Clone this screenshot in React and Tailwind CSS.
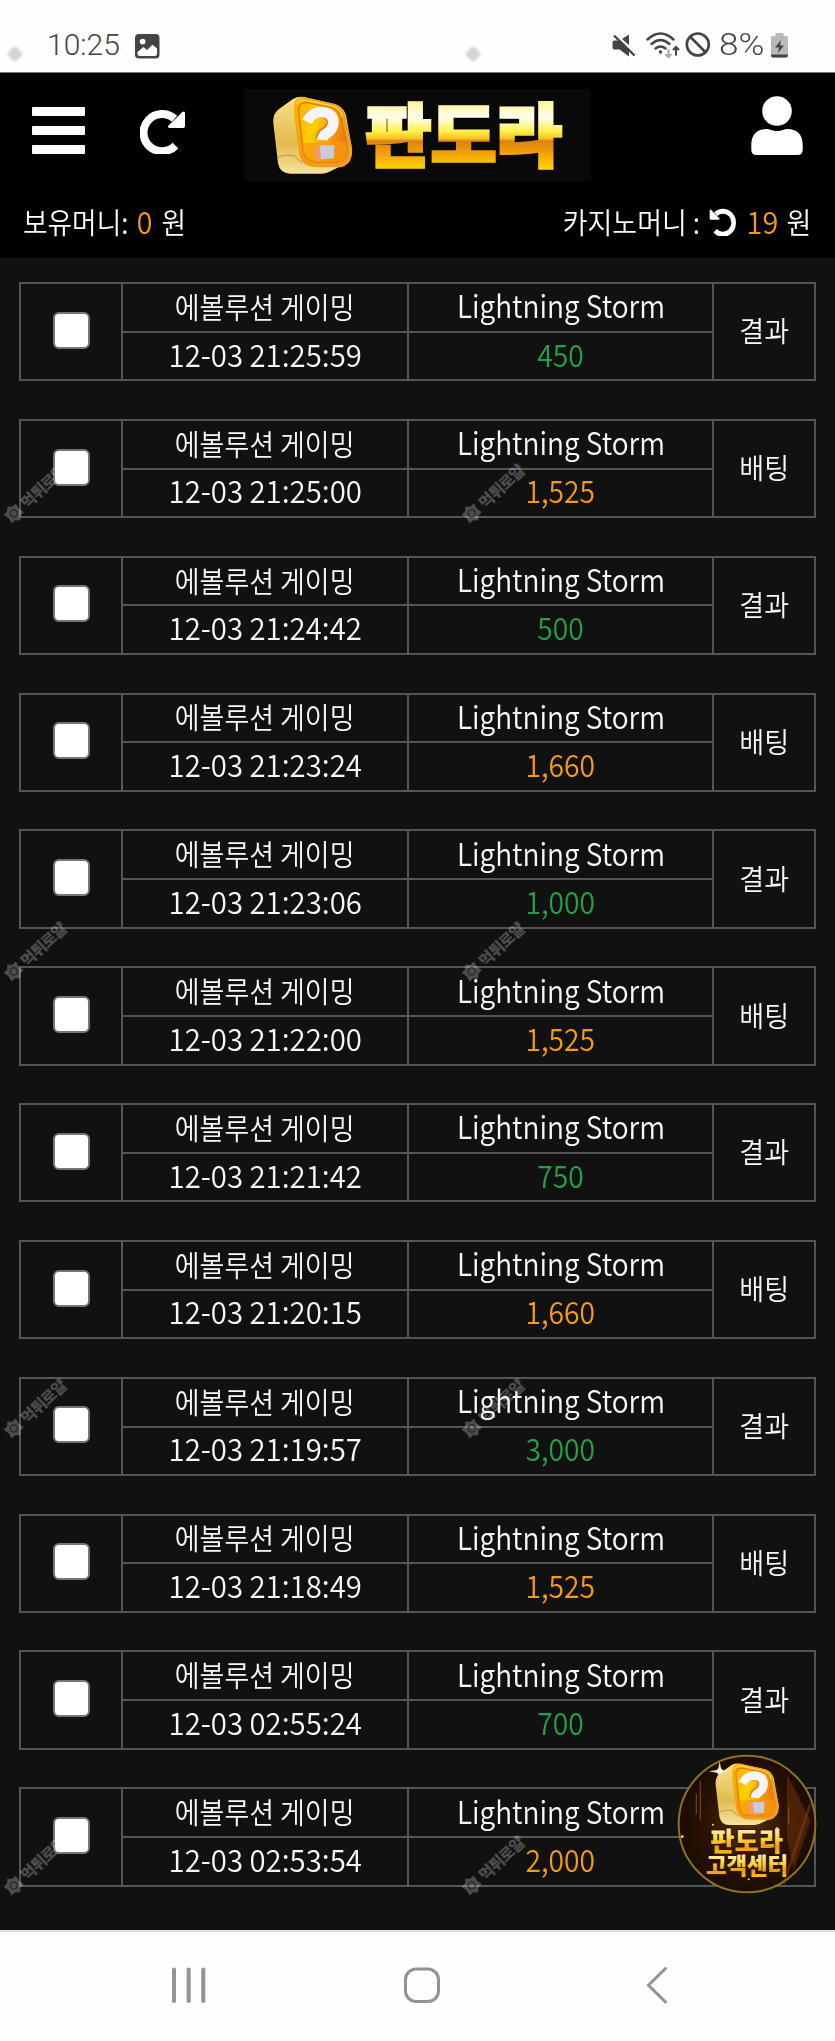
import React from "react";

const rows = [
  ["12-03 21:25:59", "450", true],
  ["12-03 21:25:00", "1,525", false],
  ["12-03 21:24:42", "500", true],
  ["12-03 21:23:24", "1,660", false],
  ["12-03 21:23:06", "1,000", true],
  ["12-03 21:22:00", "1,525", false],
  ["12-03 21:21:42", "750", true],
  ["12-03 21:20:15", "1,660", false],
  ["12-03 21:19:57", "3,000", true],
  ["12-03 21:18:49", "1,525", false],
  ["12-03 02:55:24", "700", true],
  ["12-03 02:53:54", "2,000", false],
];

const marks = [
  [35, 493], [493, 493],
  [35, 951], [493, 951],
  [35, 1408], [493, 1408],
  [35, 1865], [493, 1865],
];

function Cube() {
  return (
    <g>
      <path d="M160 56 Q180 46 205 54 L285 72 Q310 80 318 105 L336 205 Q340 235 310 255 L265 277 Q255 282 240 281 L150 281 Q120 280 114 250 L100 130 Q97 100 118 86Z" fill="url(#cubeSide)" />
      <path d="M162 75 Q165 52 190 52 L275 70 Q308 78 315 105 L336 205 Q340 250 305 262 L225 262 Q185 258 178 225 L163 110Z" fill="url(#cubeFace)" />
      <path d="M176 85 Q178 68 200 68 L270 82 Q296 88 303 112 L322 200 Q325 240 296 248 L228 246 Q195 242 190 215 L178 110Z" fill="url(#cubeInner)" stroke="#e07a00" strokeWidth="4" />
      <path d="M188 190 L318 185 L322 215 Q320 244 296 248 L228 246 Q195 242 190 215Z" fill="#f59a10" opacity=".75" />
      <path d="M170 72 Q175 60 195 60 L275 77 Q302 85 308 110" fill="none" stroke="#ffd23a" strokeWidth="5" />
      <path d="M112 232 Q135 222 165 228 L186 250" fill="none" stroke="#b98a20" strokeWidth="4" opacity=".6" />
      <path d="M204 120 Q216 96 242 97 Q276 100 275 128 Q274 148 254 158 Q243 164 243 176" fill="none" stroke="#d9643a" strokeWidth="33" strokeLinejoin="round" opacity=".7" />
      <path d="M201 125 Q215 96 245 96 Q281 98 280 130 Q278 150 260 160 Q248 167 247 180" fill="none" stroke="#f6f4f8" strokeWidth="32" strokeLinejoin="round" />
      <path d="M224 200 L245 195 L245 238 L229 245Z" fill="#f09a70" />
      <path d="M240 196 L283 195 L281 235 L243 238Z" fill="#c9cbd8" />
    </g>
  );
}

function Defs() {
  return (
    <defs>
      <linearGradient id="gold" gradientUnits="userSpaceOnUse" x1="0" y1="72" x2="0" y2="268">
        <stop offset="0" stopColor="#fff6a0" />
        <stop offset=".2" stopColor="#fffdf0" />
        <stop offset=".42" stopColor="#fff04a" />
        <stop offset=".53" stopColor="#f5c020" />
        <stop offset=".57" stopColor="#dd8210" />
        <stop offset=".72" stopColor="#f09a08" />
        <stop offset="1" stopColor="#ffd400" />
      </linearGradient>
      <linearGradient id="cubeSide" x1="0" y1="0" x2="0" y2="1">
        <stop offset="0" stopColor="#f7e08a" />
        <stop offset=".6" stopColor="#e2bb4e" />
        <stop offset="1" stopColor="#f5e3a0" />
      </linearGradient>
      <linearGradient id="cubeFace" x1="0" y1="0" x2="1" y2="1">
        <stop offset="0" stopColor="#ffb400" />
        <stop offset=".5" stopColor="#f39a10" />
        <stop offset="1" stopColor="#f0a030" />
      </linearGradient>
      <linearGradient id="cubeInner" x1="0" y1="0" x2="1" y2=".4">
        <stop offset="0" stopColor="#f5b000" />
        <stop offset=".4" stopColor="#ffd000" />
        <stop offset="1" stopColor="#ee7a10" />
      </linearGradient>
      <radialGradient id="badgeBg">
        <stop offset="0" stopColor="#5a3005" />
        <stop offset=".6" stopColor="#2c1204" />
        <stop offset="1" stopColor="#1c0c04" />
      </radialGradient>
      <linearGradient id="gold2" x1="0" y1="0" x2="0" y2="1">
        <stop offset=".2" stopColor="#fff6c0" />
        <stop offset=".5" stopColor="#fbd23c" />
        <stop offset=".7" stopColor="#e89a10" />
        <stop offset="1" stopColor="#ffd820" />
      </linearGradient>
    </defs>
  );
}

function Logo() {
  return (
    <svg className="h-[92px] w-[347px] overflow-visible bg-[#090909]" viewBox="12 27 1041 276">
      <Defs />
      <Cube />
      <text x="377" y="244" textLength="588" lengthAdjust="spacingAndGlyphs" fontSize="206" fontWeight="900" fontFamily="'Noto Sans CJK KR', sans-serif" fill="url(#gold)" stroke="url(#gold)" strokeWidth="11">판도라</text>
    </svg>
  );
}

function Reload({ className }) {
  return (
    <svg className={className} viewBox="0 0 45 45">
      <path d="M34.5 9.8 A18.6 18.6 0 1 0 35.5 36.6" fill="none" stroke="#fff" strokeWidth="8" />
      <path d="M42.2 3.2 Q45 1.2 45 4.5 V17 Q45 19 43 19 H30 Q27 18.6 28.5 16.4Z" fill="#fff" />
    </svg>
  );
}

function StatusBar() {
  return (
    <div className="flex h-[72px] items-start justify-between bg-[#fefefe] pl-[47px] pr-[47px] pt-[32px] text-[#444]">
      <div className="flex">
        <span className="w-[88px] whitespace-nowrap font-['Roboto',sans-serif] text-[30px] font-light leading-[26px]">10:25</span>
        <svg className="mt-[2px] size-[25px]" viewBox="0 0 25 25">
          <rect width="24.5" height="24.5" rx="4" fill="#444" />
          <circle cx="7.6" cy="7.6" r="2.9" fill="#fff" />
          <path d="M2.5 18 L8.5 13 L12 16 L17.5 10.8 L22 14.6 V20 Q22 22 20 22 H5 Q2.5 22 2.5 20Z" fill="#fff" />
        </svg>
      </div>
      <div className="flex">
        <svg className="h-[27px] w-[109px]" viewBox="0 0 109 27">
          <g transform="translate(10.5,0)">
            <path d="M2 8.5 H7 L16.500 2.500 V24.500 L7 17.500 H2 Q0 17.500 0 15.500 V10.500 Q0 8.500 2 8.500Z" fill="#444" />
            <path d="M2.500 2 L23.500 21.500" stroke="#fefefe" strokeWidth="2.500" />
            <path d="M1.500 3.500 L22 23.500" stroke="#444" strokeWidth="2.400" />
          </g>
          <g fill="none" stroke="#444" strokeWidth="2.400" strokeLinecap="round">
            <path d="M45.500 7.500 Q58.500 -4.500 71.500 7.500" />
            <path d="M49.500 12 Q58.500 4 67.500 12" />
            <path d="M53.500 16.500 Q58.500 12.500 63.500 16.500" />
          </g>
          <circle cx="58.5" cy="20" r="1.700" fill="#444" />
          <path d="M66.500 17 V25 M63.500 22 L66.500 25 L69.500 22" fill="none" stroke="#aaa" strokeWidth="2" />
          <path d="M74 23.500 V15 M71 18 L74 15 L77 18" fill="none" stroke="#444" strokeWidth="2" />
          <g fill="none" stroke="#444" strokeWidth="2.600">
            <circle cx="95.8" cy="12.5" r="11" />
            <path d="M88 4.500 L103.800 20.500" />
          </g>
        </svg>
        <span className="ml-[8px] w-[52px] origin-left scale-x-[1.150] whitespace-nowrap font-['Roboto',sans-serif] text-[30.500px] font-light leading-[26px]">8%</span>
        <svg className="mt-[1px] h-[25px] w-[17px]" viewBox="0 0 17 25">
          <path d="M4.500 0 H12.500 V3 H15 Q17 3 17 5 V22 Q17 24.500 15 24.500 H2 Q0 24.500 0 22 V5 Q0 3 2 3 H4.500Z" fill="#b9b9b9" />
          <path d="M0 21.500 H17 Q17 24.500 15 24.500 H2 Q0 24.500 0 22Z" fill="#444" />
          <path d="M10 7 L4 14.500 H8 L7 20 L13 12.500 H9Z" fill="#444" />
        </svg>
      </div>
    </div>
  );
}

function Header() {
  return (
    <header className="flex h-[186px] flex-col border-t border-[#777] bg-black font-['Noto_Sans_CJK_KR',sans-serif] text-white">
      <div className="flex h-[120px] items-start pl-8 pr-8 pt-[16px]">
        <div className="mt-[18px] flex w-[53px] flex-col gap-[10px]">
          <i className="h-[9px] rounded-[1px] bg-white" />
          <i className="h-[9px] rounded-[1px] bg-white" />
          <i className="h-[9px] rounded-[1px] bg-white" />
        </div>
        <Reload className="ml-[55px] mt-[20px] size-[45px]" />
        <div className="ml-[59px]"><Logo /></div>
        <svg className="ml-auto mt-[7px] h-[59px] w-[52px]" viewBox="0 0 52 59">
          <circle cx="26" cy="15" r="14.8" fill="#fff" />
          <path d="M15.500 33 C19 33 21 35 26 35 S33 33 36.500 33 Q51.700 33.500 51.700 49 V54 Q51.500 59 46.500 59 H5.500 Q.5 59 .3 54 V49 Q.3 33.500 15.500 33Z" fill="#fff" />
        </svg>
      </div>
      <div className="flex h-[57px] items-center justify-between pl-[23px] pr-[24px] text-[29px] font-[350]">
        <div className="flex origin-left scale-x-[0.920] items-center whitespace-nowrap">
          <span>보유머니:</span><span className="ml-[9px] text-[31px] text-[#f39c12]">0</span><span className="ml-[10px]">원</span>
        </div>
        <div className="flex origin-right scale-x-[0.930] items-center whitespace-nowrap">
          <span>카지노머니 :</span>
          <Reload className="ml-[9px] mt-[1px] h-[28px] w-[30px] -scale-x-100" />
          <span className="ml-[11px] text-[31px] text-[#f39c12]">19</span><span className="ml-[9px]">원</span>
        </div>
      </div>
    </header>
  );
}

function Row({ time, amount, result }) {
  return (
    <div className="flex h-[99.350px] shrink-0 border-2 border-[#555] text-[#f8f8f8]">
      <div className="flex w-[100px] items-center justify-center">
        <span className="mb-[3px] ml-[1px] size-[37px] rounded-[6px] border-2 border-[#767676] bg-white" />
      </div>
      <div className="flex w-[288px] flex-col border-x-2 border-[#555]">
        <div className="flex h-[48.800px] items-center justify-center border-b-2 border-[#555] pb-[2px]">
          <span className="scale-x-[0.930] whitespace-nowrap text-[29px] leading-none">에볼루션 게이밍</span>
        </div>
        <div className="flex h-[46.500px] items-center justify-center pb-[6px]">
          <span className="scale-x-[0.945] whitespace-nowrap text-[31px] leading-none">{time}</span>
        </div>
      </div>
      <div className="flex w-[303px] flex-col">
        <div className="flex h-[48.800px] items-center justify-center border-b-2 border-[#555] pb-[5px]">
          <span className="scale-x-[0.905] whitespace-nowrap text-[31px] leading-none">Lightning Storm</span>
        </div>
        <div className="flex h-[46.500px] items-center justify-center pb-[6px]">
          <span className={result ? "scale-x-[0.910] text-[31px] leading-none text-[#24a148]" : "scale-x-[0.910] text-[31px] leading-none text-[#f39c12]"}>{amount}</span>
        </div>
      </div>
      <div className="flex flex-1 items-center justify-center border-l-2 border-[#555] pb-[2px]">
        <span className="scale-x-[0.950] whitespace-nowrap text-[28.500px] leading-none">{result ? "결과" : "배팅"}</span>
      </div>
    </div>
  );
}

function Watermark({ x, y }) {
  return (
    <div className="pointer-events-none absolute flex h-[18px] w-[78px] -translate-x-1/2 -translate-y-1/2 -rotate-[43deg] items-center gap-[3px] text-white/25" style={{ left: x, top: y }}>
      <svg className="size-[19px] shrink-0" viewBox="0 0 16 16">
        <path d="M8 0 L11 3 L15 3 L14 8 L15 13 L11 13 L8 16 L5 13 L1 13 L2 8 L1 3 L5 3Z" fill="currentColor" />
        <circle cx="8" cy="8" r="3" fill="none" stroke="#222" strokeWidth="1" />
      </svg>
      <span className="whitespace-nowrap text-[16px] font-black leading-none tracking-[-1px]">먹튀로얄</span>
    </div>
  );
}

function SupportBadge() {
  return (
    <svg className="absolute left-[677px] top-[1754px] size-[140px]" viewBox="0 0 420 420">
      <circle cx="210" cy="210" r="205" fill="url(#badgeBg)" stroke="#8a7420" strokeWidth="6" />
      <path d="M330 60 L400 200 L350 350 L330 250Z" fill="#7a3a0c" opacity=".45" />
      <path d="M400 150 L320 390" stroke="#a04a10" strokeWidth="8" opacity=".4" />
      <path d="M70 80 V200 M58 120 V180 M335 160 V210" stroke="#a87414" strokeWidth="4" opacity=".5" />
      <g transform="translate(36,-12) scale(.8)"><Cube /></g>
      <path d="M128 22 L133 47 L158 52 L133 57 L128 90 L123 57 L95 52 L123 47Z" fill="#ffd9a0" />
      <circle cx="128" cy="52" r="9" fill="#fff" opacity=".8" />
      <g fontWeight="900" fontFamily="'Noto Sans CJK KR', sans-serif" fill="url(#gold2)" stroke="#2a1404" strokeWidth="6" paintOrder="stroke">
        <text x="100" y="290" textLength="218" lengthAdjust="spacingAndGlyphs" fontSize="80">판도라</text>
        <text x="87" y="359" textLength="246" lengthAdjust="spacingAndGlyphs" fontSize="69">고객센터</text>
      </g>
      <g fill="#ffd860"><circle cx="16" cy="248" r="4" /><circle cx="108" cy="212" r="3" /><circle cx="300" cy="222" r="3" /><circle cx="215" cy="376" r="3" /></g>
    </svg>
  );
}

export default function App() {
  return (
    <div className="relative flex h-[2041px] w-[835px] flex-col overflow-hidden bg-[#111] font-['Noto_Sans_CJK_KR',sans-serif] font-[350]">
      <StatusBar />
      <Header />
      <main className="flex h-[1672px] shrink-0 flex-col gap-[37.500px] pl-[19px] pr-[19px] pt-[24px]">
        {rows.map(([time, amount, result]) => (
          <Row key={time} time={time} amount={amount} result={result} />
        ))}
      </main>
      <nav className="h-[111px] shrink-0 border-t-2 border-[#ddd] bg-[#fefefe]">
        <svg className="h-[109px] w-[835px]" viewBox="0 0 835 109" fill="none" stroke="#939393" strokeLinecap="round">
          <path d="M174 37.500 V69 M188.700 37.500 V69 M203.300 37.500 V69" strokeWidth="4" />
          <rect x="405.5" y="37" width="33" height="32.5" rx="10.5" strokeWidth="3" />
          <path d="M665.500 36.500 L648.500 53.300 L665.500 70" strokeWidth="3" />
        </svg>
      </nav>
      {marks.map(([x, y]) => <Watermark key={x + "-" + y} x={x} y={y} />)}
      <div className="absolute left-[9px] top-[48px] size-[12px] rotate-45 rounded-[3px] bg-[#d4d4d4] blur-[1px]" />
      <div className="absolute left-[467px] top-[48px] size-[12px] rotate-45 rounded-[3px] bg-[#d4d4d4] blur-[1px]" />
      <SupportBadge />
    </div>
  );
}
